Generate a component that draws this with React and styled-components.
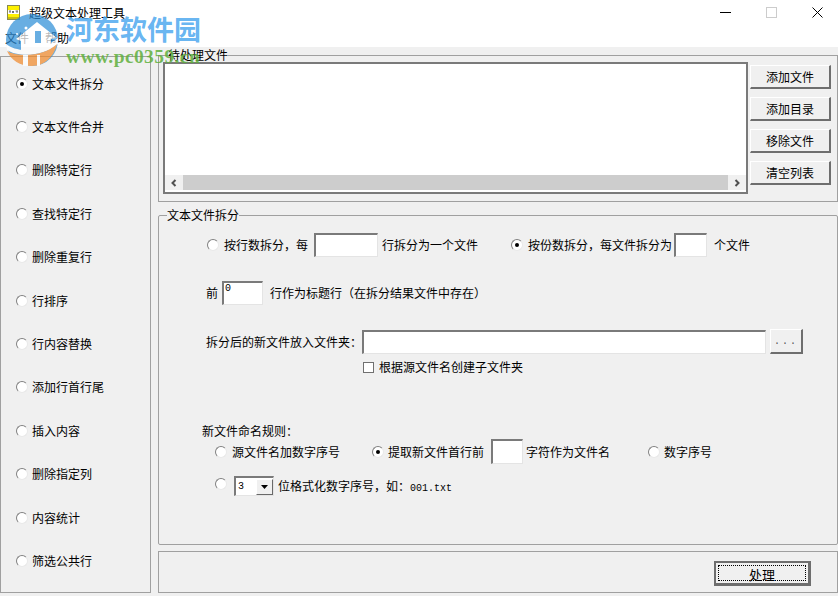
import React from 'react';
import styled, { createGlobalStyle, css } from 'styled-components';

const GlobalStyle = createGlobalStyle`
  html, body {
    margin: 0;
    padding: 0;
    background: #f0f0f0;
  }
  body {
    font-family: 'Noto Sans CJK SC', 'Liberation Sans', sans-serif;
    font-size: 12px;
    color: #000;
  }
`;

const sunken = css`
  box-sizing: border-box;
  background: #fff;
  border-style: solid;
  border-width: 2px 1px 1px 2px;
  border-color: #7a7a7a #e4e4e4 #e4e4e4 #7a7a7a;
`;

const Window = styled.div`
  position: relative;
  width: 838px;
  height: 596px;
  overflow: hidden;
  background: #f0f0f0;
`;

const TitleBar = styled.div`
  display: flex;
  align-items: center;
  height: 25px;
  padding-left: 7px;
  background: #fff;
`;

const TitleText = styled.span`
  margin-left: 9px;
  line-height: 14px;
`;

const WindowButtons = styled.div`
  display: flex;
  margin: 0 -2px 0 auto;
`;

const WindowButton = styled.div`
  display: flex;
  align-items: center;
  justify-content: center;
  width: 46px;
  height: 25px;
`;

const MenuBar = styled.div`
  display: flex;
  gap: 16px;
  height: 22px;
  padding-left: 5px;
  background: #fff;
  line-height: 26px;
`;

const Body = styled.div`
  display: flex;
`;

const Sidebar = styled.div`
  box-sizing: border-box;
  display: grid;
  grid-auto-rows: 43.4px;
  align-items: center;
  width: 151px;
  height: 537px;
  margin-top: 9px;
  padding: 5px 0 0 15px;
  border: 1px solid #a0a0a0;
`;

const Main = styled.div`
  display: flex;
  flex-direction: column;
  width: 680px;
  margin-left: 7px;
  padding-top: 1px;
`;

const Group = styled.fieldset`
  box-sizing: border-box;
  min-width: 0;
  height: ${(p) => p.$h}px;
  margin: ${(p) => p.$mt || 0}px 0 0;
  padding: 0;
  border: 1px solid #a0a0a0;
  border-radius: ${(p) => (p.$round ? 2 : 0)}px;
`;

const Legend = styled.legend`
  margin-left: ${(p) => p.$ml || 8}px;
  padding: 0;
  line-height: 14px;
`;

const FileArea = styled.div`
  display: flex;
  padding-left: 4px;
`;

const FileList = styled.div`
  ${sunken}
  display: flex;
  flex-direction: column;
  justify-content: flex-end;
  width: 585px;
  height: 132px;
  border-width: 2px;
  border-color: #7a7a7a;
`;

const ScrollBar = styled.div`
  display: flex;
  height: 15px;
  margin-bottom: 2px;
  background: #f0f0f0;
`;

const ScrollArrow = styled.div`
  display: flex;
  align-items: center;
  justify-content: center;
  width: 18px;
`;

const ScrollThumb = styled.div`
  flex: 1;
  background: #cdcdcd;
`;

const SideButtons = styled.div`
  display: flex;
  flex-direction: column;
  gap: 8px;
  margin-left: 2px;
  padding-top: 3px;
`;

const Button = styled.button`
  box-sizing: border-box;
  width: ${(p) => p.$w || 81}px;
  height: ${(p) => p.$h || 24}px;
  margin-left: ${(p) => p.$ml || 0}px;
  padding: 0;
  background: #f0f0f0;
  border-style: solid;
  border-width: 1px 2px 2px 1px;
  border-color: #fff #6e6e6e #6e6e6e #fff;
  border-radius: 0;
  font: inherit;
  color: inherit;
`;

const BrowseButton = styled(Button)`
  font: 10px 'Liberation Mono', monospace;
  letter-spacing: 2px;
  color: #555;
`;

const DefaultButton = styled(Button)`
  display: flex;
  padding: 2px;
  border-width: 2px 3px 3px 2px;
  border-color: #6e6e6e;
`;

const FocusRing = styled.span`
  flex: 1;
  border: 1px dotted #000;
  line-height: 17px;
  font-size: 13px;
`;

const Row = styled.div`
  display: flex;
  align-items: center;
  height: ${(p) => p.$h}px;
  margin-top: ${(p) => p.$mt}px;
  padding-left: ${(p) => p.$pl}px;
`;

const Label = styled.span`
  margin-left: ${(p) => p.$ml || 0}px;
  line-height: 14px;
  white-space: nowrap;
`;

const Choice = styled.label`
  display: flex;
  align-items: center;
  gap: 4px;
  line-height: 14px;
`;

const Radio = styled.span`
  box-sizing: border-box;
  display: flex;
  flex: none;
  align-items: center;
  justify-content: center;
  width: 12px;
  height: 12px;
  margin-left: ${(p) => p.$ml || 0}px;
  align-self: ${(p) => (p.$top ? 'flex-start' : 'center')};
  margin-top: ${(p) => (p.$top ? 2 : 0)}px;
  background: #fff;
  border: 1px solid;
  border-color: #808080 #e8e8e8 #e8e8e8 #808080;
  border-radius: 50%;

  &::after {
    content: '';
    display: ${(p) => (p.$on ? 'block' : 'none')};
    width: 4px;
    height: 4px;
    background: #000;
    border-radius: 50%;
  }
`;

const Field = styled.input`
  ${sunken}
  width: ${(p) => p.$w}px;
  height: ${(p) => p.$h || 24}px;
  margin: 0 0 0 ${(p) => p.$ml || 0}px;
  padding: 0 0 10px 1px;
  outline: none;
  border-radius: 0;
  font: 10px 'Liberation Mono', monospace;
`;

const Checkbox = styled.span`
  ${sunken}
  flex: none;
  width: 11px;
  height: 11px;
  border-width: 1px;
  border-color: #707070;
`;

const Combo = styled.div`
  ${sunken}
  display: flex;
  align-items: center;
  justify-content: space-between;
  width: 40px;
  height: 20px;
  margin-left: ${(p) => p.$ml}px;
  padding-left: 2px;
  font: 10px 'Liberation Mono', monospace;
`;

const ComboArrow = styled.span`
  box-sizing: border-box;
  display: flex;
  align-items: center;
  justify-content: center;
  width: 17px;
  height: 16px;
  background: #f0f0f0;
  border-style: solid;
  border-width: 1px;
  border-color: #fff #696969 #696969 #fff;
`;

const Mono = styled.span`
  font: 10px 'Liberation Mono', monospace;
`;

const ActionBar = styled.div`
  box-sizing: border-box;
  display: flex;
  align-items: center;
  justify-content: flex-end;
  height: 42px;
  margin-top: 6px;
  padding: 3px 26px 0 0;
  border: 1px solid #a0a0a0;
`;

const Watermark = styled.div`
  position: absolute;
  top: 14px;
  left: 5px;
  display: flex;
  pointer-events: none;
`;

const LogoMark = styled.svg`
  flex: none;
  opacity: 0.72;
`;

const WatermarkText = styled.div`
  display: flex;
  flex-direction: column;
  margin: -1px 0 0 7px;
  font-family: 'Liberation Serif', 'Noto Sans CJK SC', serif;
  font-weight: 700;
`;

const BrandName = styled.span`
  font-family: 'Noto Sans CJK SC', serif;
  font-size: 27px;
  line-height: 32px;
  color: rgba(85, 172, 240, 0.9);
`;

const BrandUrl = styled.span`
  margin-top: 2px;
  font-size: 19.5px;
  line-height: 20px;
  letter-spacing: 0.4px;
  white-space: nowrap;
  color: rgba(95, 175, 60, 0.85);
`;

const TxtIcon = () => (
  <svg width="13" height="15" viewBox="0 0 13 15">
    <rect x="0.5" y="0.5" width="12" height="14" fill="#fdf000" stroke="#8a8a50" />
    <rect x="1" y="5" width="11" height="4" fill="#fff" />
    <path d="M2 6h2M3 6v2M5 6l2 2M7 6l-2 2M8.5 6h2.5M10 6v2" stroke="#333" strokeWidth="0.7" fill="none" />
    <rect x="1" y="12" width="11" height="2" fill="#c9bc10" />
  </svg>
);

const Logo = () => (
  <LogoMark width="54" height="53" viewBox="0 0 54 53">
    <circle cx="27" cy="26" r="26" fill="#2f8fd8" />
    <path d="M32 8 11 25l5 2v9h30V25l6-1z" fill="#fff" />
    <path d="M30 17h6v12h-6z" fill="#2f8fd8" />
    <path d="M1 30c10 8 32 10 52-6v6C40 42 14 44 2 36z" fill="#fff" />
    <path d="M2 37c12 7 38 5 50-7C49 43 39 52 27 52 15 52 6 46 2 37z" fill="#f08a2c" />
    <path d="M18 41h5v11h-5zM32 41h3v11h-3z" fill="#fff" />
    <circle cx="21" cy="14" r="1.5" fill="#fff" />
    <circle cx="12" cy="20" r="1" fill="#fff" />
  </LogoMark>
);

const LeftArrow = () => (
  <svg width="8" height="8" viewBox="0 0 8 8">
    <path d="M5.5 1 2.5 4l3 3" fill="none" stroke="#505050" strokeWidth="2" />
  </svg>
);

const RightArrow = () => (
  <svg width="8" height="8" viewBox="0 0 8 8">
    <path d="M2.5 1l3 3-3 3" fill="none" stroke="#505050" strokeWidth="2" />
  </svg>
);

const modes = [
  '文本文件拆分',
  '文本文件合并',
  '删除特定行',
  '查找特定行',
  '删除重复行',
  '行排序',
  '行内容替换',
  '添加行首行尾',
  '插入内容',
  '删除指定列',
  '内容统计',
  '筛选公共行',
];

const fileButtons = ['添加文件', '添加目录', '移除文件', '清空列表'];

const App = () => (
  <Window>
    <GlobalStyle />
    <TitleBar>
      <TxtIcon />
      <TitleText>超级文本处理工具</TitleText>
      <WindowButtons>
        <WindowButton>
          <svg width="11" height="11" viewBox="0 0 11 11">
            <path d="M0 5.5h11" stroke="#000" />
          </svg>
        </WindowButton>
        <WindowButton>
          <svg width="11" height="11" viewBox="0 0 11 11">
            <rect x="0.5" y="0.5" width="10" height="10" fill="none" stroke="#ccc" />
          </svg>
        </WindowButton>
        <WindowButton>
          <svg width="11" height="11" viewBox="0 0 11 11">
            <path d="M0.5 0.5l10 10M10.5 0.5l-10 10" stroke="#000" />
          </svg>
        </WindowButton>
      </WindowButtons>
    </TitleBar>
    <MenuBar>
      <span>文件</span>
      <span>帮助</span>
    </MenuBar>
    <Body>
      <Sidebar>
        {modes.map((mode, i) => (
          <Choice key={mode}>
            <Radio $on={i === 0} />
            {mode}
          </Choice>
        ))}
      </Sidebar>
      <Main>
        <Group $h={154}>
          <Legend $ml={9}>待处理文件</Legend>
          <FileArea>
            <FileList>
              <ScrollBar>
                <ScrollArrow>
                  <LeftArrow />
                </ScrollArrow>
                <ScrollThumb />
                <ScrollArrow>
                  <RightArrow />
                </ScrollArrow>
              </ScrollBar>
            </FileList>
            <SideButtons>
              {fileButtons.map((label) => (
                <Button key={label}>{label}</Button>
              ))}
            </SideButtons>
          </FileArea>
        </Group>
        <Group $h={337} $mt={6} $round>
          <Legend>文本文件拆分</Legend>
          <Row $h={24} $mt={11} $pl={48}>
            <Radio />
            <Label $ml={5}>按行数拆分，每</Label>
            <Field $w={64} $ml={6} />
            <Label $ml={4}>行拆分为一个文件</Label>
            <Radio $on $ml={33} />
            <Label $ml={5}>按份数拆分，每文件拆分为</Label>
            <Field $w={33} $ml={2} />
            <Label $ml={7}>个文件</Label>
          </Row>
          <Row $h={24} $mt={24} $pl={47}>
            <Label>前</Label>
            <Field $w={41} $ml={4} defaultValue="0" />
            <Label $ml={7}>行作为标题行（在拆分结果文件中存在）</Label>
          </Row>
          <Row $h={25} $mt={24} $pl={47}>
            <Label>拆分后的新文件放入文件夹：</Label>
            <Field $w={404} />
            <BrowseButton $w={33} $h={25} $ml={4}>
              ...
            </BrowseButton>
          </Row>
          <Row $h={12} $mt={7} $pl={204}>
            <Checkbox />
            <Label $ml={5}>根据源文件名创建子文件夹</Label>
          </Row>
          <Row $h={14} $mt={51} $pl={43}>
            <Label>新文件命名规则：</Label>
          </Row>
          <Row $h={25} $mt={1} $pl={56}>
            <Radio />
            <Label $ml={5}>源文件名加数字序号</Label>
            <Radio $on $ml={32} />
            <Label $ml={4}>提取新文件首行前</Label>
            <Field $w={32} $h={25} $ml={7} />
            <Label $ml={3}>字符作为文件名</Label>
            <Radio $ml={38} />
            <Label $ml={4}>数字序号</Label>
          </Row>
          <Row $h={20} $mt={12} $pl={56}>
            <Radio $top />
            <Combo $ml={7}>
              3
              <ComboArrow>
                <svg width="7" height="4" viewBox="0 0 7 4">
                  <path d="M0 0h7L3.5 4z" fill="#000" />
                </svg>
              </ComboArrow>
            </Combo>
            <Label $ml={4}>
              位格式化数字序号，如：<Mono>001.txt</Mono>
            </Label>
          </Row>
        </Group>
        <ActionBar>
          <DefaultButton $w={97} $h={25}>
            <FocusRing>处理</FocusRing>
          </DefaultButton>
        </ActionBar>
      </Main>
    </Body>
    <Watermark>
      <Logo />
      <WatermarkText>
        <BrandName>河东软件园</BrandName>
        <BrandUrl>www.pc0359.cn</BrandUrl>
      </WatermarkText>
    </Watermark>
  </Window>
);

export default App;
